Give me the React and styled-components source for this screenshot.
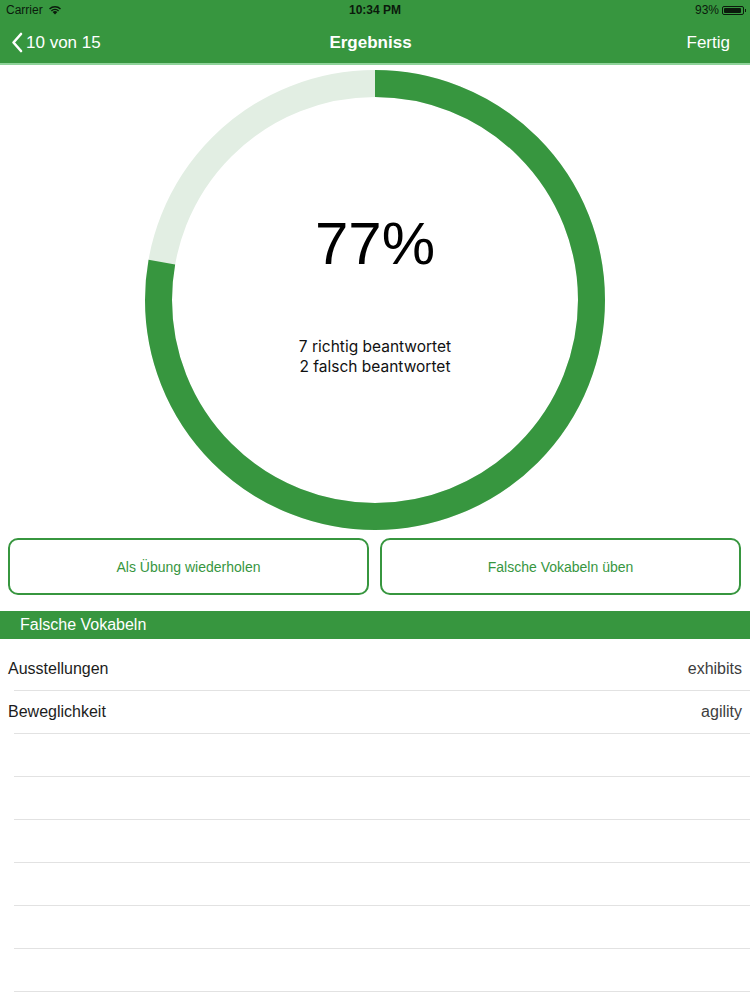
import React from "react";
import styled, { createGlobalStyle } from "styled-components";

const GREEN = "#37963f";

const Global = createGlobalStyle`
  html, body { margin: 0; padding: 0; background: #fff; }
  body { font-family: "Liberation Sans", Arial, sans-serif; }
`;

const Page = styled.div`
  width: 750px;
  height: 1000px;
  overflow: hidden;
  display: flex;
  flex-direction: column;
  background: #fff;
`;

const Top = styled.header`
  background: ${GREEN};
  border-bottom: 2px solid #8fd39a;
  display: flex;
  flex-direction: column;
`;

const StatusBar = styled.div`
  height: 20px;
  display: grid;
  grid-template-columns: 1fr auto 1fr;
  align-items: center;
  padding: 0 6px;
  font-size: 12px;
  color: #0b1a0c;
`;

const StatusLeft = styled.div`
  display: flex;
  align-items: center;
  gap: 5px;
`;

const StatusTime = styled.div`
  font-weight: bold;
`;

const StatusRight = styled.div`
  display: flex;
  justify-content: flex-end;
  align-items: center;
  gap: 3px;
`;

const Battery = styled.div`
  width: 22px;
  height: 9px;
  border: 1px solid #0b1a0c;
  border-radius: 2px;
  padding: 1px;
  box-sizing: border-box;
  position: relative;
  &::before {
    content: "";
    display: block;
    height: 100%;
    width: 93%;
    background: #0b1a0c;
    border-radius: 1px;
  }
  &::after {
    content: "";
    position: absolute;
    right: -3px;
    top: 2px;
    width: 1.5px;
    height: 3px;
    background: #0b1a0c;
  }
`;

const NavBar = styled.div`
  height: 41px;
  display: grid;
  grid-template-columns: 1fr auto 1fr;
  align-items: center;
  padding: 2px 20px 0 11px;
  color: #fff;
  font-size: 17px;
`;

const Back = styled.div`
  display: flex;
  align-items: center;
  gap: 3px;
`;

const Title = styled.div`
  font-weight: bold;
`;

const Done = styled.div`
  justify-self: end;
`;

const RingWrap = styled.div`
  position: relative;
  width: 460px;
  height: 460px;
  margin: 5px auto 0;
`;

const RingCenter = styled.div`
  position: absolute;
  inset: 0;
  display: flex;
  flex-direction: column;
  align-items: center;
`;

const Percent = styled.div`
  margin-top: 139px;
  font-size: 60px;
  line-height: 70px;
  color: #000;
`;

const Stats = styled.div`
  margin-top: 58px;
  font-family: Inter, "Liberation Sans", sans-serif;
  font-size: 15.5px;
  line-height: 20px;
  color: #111;
  text-align: center;
`;

const Buttons = styled.div`
  display: grid;
  grid-template-columns: 1fr 1fr;
  gap: 11px;
  padding: 8px 9px 0 8px;
`;

const Button = styled.button`
  height: 57px;
  background: #fff;
  border: 2px solid ${GREEN};
  border-radius: 10px;
  color: ${GREEN};
  font-family: "Liberation Sans", Arial, sans-serif;
  font-size: 14px;
`;

const SectionHeader = styled.div`
  margin-top: 16px;
  height: 28px;
  background: ${GREEN};
  color: #fff;
  font-size: 16px;
  display: flex;
  align-items: center;
  padding-left: 20px;
`;

const List = styled.div`
  padding-top: 9px;
  display: flex;
  flex-direction: column;
`;

const Row = styled.div`
  height: 42px;
  display: flex;
  align-items: center;
  justify-content: space-between;
  padding: 0 8px;
  font-size: 16px;
  color: #1c1c1c;
  position: relative;
  border-bottom: 1px solid transparent;
  &::after {
    content: "";
    position: absolute;
    left: 14px;
    right: 0;
    bottom: -1px;
    height: 1px;
    background: #e2e2e2;
  }
`;

const Detail = styled.span`
  color: #3d3d3d;
`;

function Ring() {
  const r = 216.5;
  const c = 2 * Math.PI * r;
  const frac = 7 / 9;
  return (
    <svg width="460" height="460" viewBox="0 0 460 460">
      <circle cx="230" cy="230" r={r} fill="none" stroke="#e2eee3" strokeWidth="27" />
      <circle
        cx="230"
        cy="230"
        r={r}
        fill="none"
        stroke={GREEN}
        strokeWidth="27"
        strokeDasharray={`${c * frac} ${c}`}
        transform="rotate(-90 230 230)"
      />
    </svg>
  );
}

const rows = [
  ["Ausstellungen", "exhibits"],
  ["Beweglichkeit", "agility"],
  ["", ""],
  ["", ""],
  ["", ""],
  ["", ""],
  ["", ""],
  ["", ""],
];

export default function App() {
  return (
    <Page>
      <Global />
      <Top>
        <StatusBar>
          <StatusLeft>
            Carrier
            <svg width="14" height="10" viewBox="0 0 14 10">
              <path d="M7 9.6 L4.6 7.1 A3.4 3.4 0 0 1 9.4 7.1 Z" fill="#0b1a0c" />
              <path d="M2.9 5.4 A5.8 5.8 0 0 1 11.1 5.4 L10.1 6.4 A4.4 4.4 0 0 0 3.9 6.4 Z" fill="#0b1a0c" />
              <path d="M1 3.5 A8.5 8.5 0 0 1 13 3.5 L12 4.5 A7.1 7.1 0 0 0 2 4.5 Z" fill="#0b1a0c" />
            </svg>
          </StatusLeft>
          <StatusTime>10:34 PM</StatusTime>
          <StatusRight>
            93%
            <Battery />
          </StatusRight>
        </StatusBar>
        <NavBar>
          <Back>
            <svg width="12" height="21" viewBox="0 0 12 21">
              <path d="M10 2 L2.5 10.5 L10 19" fill="none" stroke="#fff" strokeWidth="2.6" strokeLinecap="round" strokeLinejoin="round" />
            </svg>
            10 von 15
          </Back>
          <Title>Ergebniss</Title>
          <Done>Fertig</Done>
        </NavBar>
      </Top>
      <RingWrap>
        <Ring />
        <RingCenter>
          <Percent>77%</Percent>
          <Stats>
            7 richtig beantwortet
            <br />
            2 falsch beantwortet
          </Stats>
        </RingCenter>
      </RingWrap>
      <Buttons>
        <Button>Als Übung wiederholen</Button>
        <Button>Falsche Vokabeln üben</Button>
      </Buttons>
      <SectionHeader>Falsche Vokabeln</SectionHeader>
      <List>
        {rows.map(([a, b], i) => (
          <Row key={i}>
            <span>{a}</span>
            <Detail>{b}</Detail>
          </Row>
        ))}
      </List>
    </Page>
  );
}
